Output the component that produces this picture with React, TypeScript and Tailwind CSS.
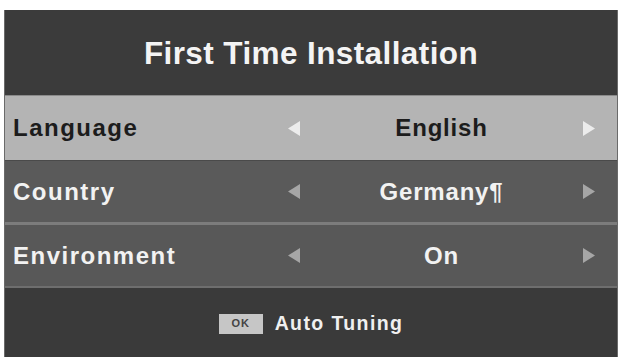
import React from "react";

const LeftArrow = ({ color }: { color: string }) => (
  <svg viewBox="0 0 14 17" className="block shrink-0 w-[14px] h-[17px]">
    <path d="M13 1 L1 8.5 L13 16 Z" fill={color} />
  </svg>
);
const RightArrow = ({ color }: { color: string }) => (
  <svg viewBox="0 0 14 17" className="block shrink-0 w-[14px] h-[17px]">
    <path d="M1 1 L13 8.5 L1 16 Z" fill={color} />
  </svg>
);

type RowProps = {
  label: string;
  value: string;
  active?: boolean;
  className: string;
};

function Row({ label, value, active, className }: RowProps) {
  const textColor = active ? "text-[#1c1c1c]" : "text-[#f2f2f2]";
  const arrowColor = active ? "#ececec" : "#a6a6a6";
  return (
    <div className={`flex items-center ${className}`}>
      <div className={`w-[282px] shrink-0 pl-[8px] text-[24px] font-bold tracking-[1.5px] ${textColor}`}>{label}</div>
      <LeftArrow color={arrowColor} />
      <div className={`flex-1 text-center text-[24px] font-bold tracking-[0.8px] ${textColor}`}>{value}</div>
      <div className="pr-[21px] shrink-0">
        <RightArrow color={arrowColor} />
      </div>
    </div>
  );
}

export default function App() {
  return (
    <div
      className="w-[623px] h-[357px] bg-white pt-[10px] pl-[4px] pr-[5px] overflow-hidden"
      style={{ fontFamily: '"Liberation Sans", Arial, sans-serif' }}
    >
      <div className="h-[347px] flex flex-col bg-[#3b3b3b] border-l border-r border-[#6a6a6a]">
        <div className="h-[85px] flex items-center justify-center pt-[2px] text-[31.5px] font-bold tracking-[0.4px] text-[#f4f4f4]">
          First Time Installation
        </div>
        <div className="h-[1px] bg-[#8a8a8a]" />
        <Row label="Language" value="English" active className="h-[64px] bg-[#b4b4b4]" />
        <div className="h-[1px] bg-[#4a4a4a]" />
        <Row label="Country" value="Germany¶" className="h-[61px] bg-[#5a5a5a]" />
        <div className="h-[3px] bg-[#7c7c7c]" />
        <Row label="Environment" value="On" className="h-[61px] bg-[#585858]" />
        <div className="h-[2px] bg-[#6e6e6e]" />
        <div className="flex-1 flex items-center justify-center gap-[12px] bg-[#3a3a3a] pt-[2px]">
          <div className="w-[44px] h-[20px] bg-[#c6c6c6] flex items-center justify-center text-[11px] font-bold text-[#444] tracking-[1px]">
            OK
          </div>
          <div className="text-[19.5px] font-bold tracking-[1.4px] text-[#f0f0f0]">Auto Tuning</div>
        </div>
      </div>
    </div>
  );
}
